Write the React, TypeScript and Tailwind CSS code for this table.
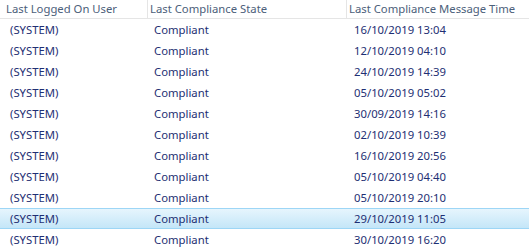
import React from "react";

const rows = [
  "16/10/2019 13:04",
  "12/10/2019 04:10",
  "24/10/2019 14:39",
  "05/10/2019 05:02",
  "30/09/2019 14:16",
  "02/10/2019 10:39",
  "16/10/2019 20:56",
  "05/10/2019 04:40",
  "05/10/2019 20:10",
  "29/10/2019 11:05",
  "30/10/2019 16:20",
];

const selected = 9;

export default function App() {
  return (
    <div
      className="w-[529px] h-[252px] bg-white overflow-hidden text-[11.3px] leading-none"
      style={{ fontFamily: '"Noto Sans", "Open Sans", sans-serif' }}
    >
      <div className="grid grid-cols-[148px_199px_182px] h-[19px] border-b border-[#e5e5e5] text-[#4c607a]">
        <div className="flex items-center pl-[6px] border-r border-[#e5e5e5]">Last Logged On User</div>
        <div className="flex items-center pl-[2px] border-r border-[#e5e5e5]">Last Compliance State</div>
        <div className="flex items-center pl-[2px]">Last Compliance Message Time</div>
      </div>
      {rows.map((time, i) => (
        <div
          key={i}
          className={
            "grid grid-cols-[148px_199px_182px] h-[21px] text-[#1e2f73] " +
            (i === selected
              ? "bg-gradient-to-b from-[#e6f5fd] to-[#c4e6f8] border-y border-[#9dd6f6]"
              : "")
          }
        >
          <div className="flex items-center pl-[10px]">(SYSTEM)</div>
          <div className="flex items-center pl-[6px]">Compliant</div>
          <div className="flex items-center pl-[7px]">{time}</div>
        </div>
      ))}
    </div>
  );
}
